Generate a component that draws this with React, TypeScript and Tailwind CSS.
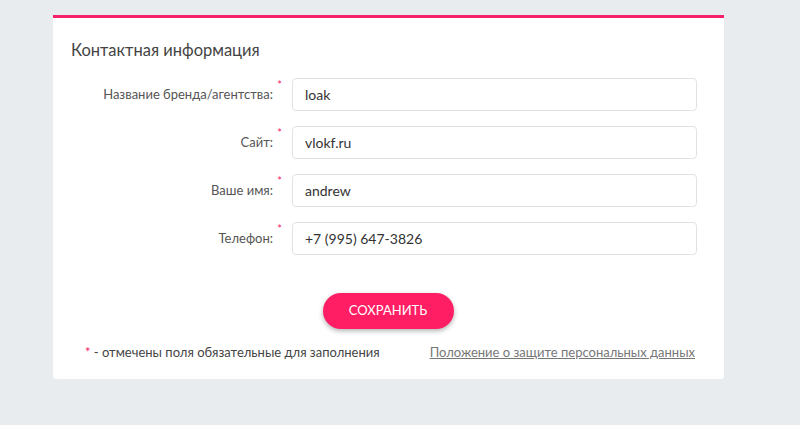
import React from "react";

const rows = [
  { label: "Название бренда/агентства:", value: "loak" },
  { label: "Сайт:", value: "vlokf.ru" },
  { label: "Ваше имя:", value: "andrew" },
  { label: "Телефон:", value: "+7 (995) 647-3826" },
];

export default function App() {
  return (
    <div className="min-h-[425px] w-[800px] bg-[#e9ecef] pt-[15px] text-[#444]" style={{ fontFamily: "Lato, 'Noto Sans', sans-serif" }}>
      <div className="ml-[53px] w-[671px] rounded-b-[4px] border-t-[3px] border-[#f5226a] bg-white pb-[16px] pl-[18px] pr-[27px] pt-[21px]">
        <h2 className="text-[16.5px] leading-[22px] text-[#444]">Контактная информация</h2>
        <div className="mt-[17px] flex flex-col gap-[15px]">
          {rows.map((r) => (
            <div key={r.label} className="flex items-center">
              <div className="flex w-[221px] justify-end pr-[19px]">
                <span className="relative text-[13px] text-[#555]">
                  {r.label}
                  <span className="absolute -right-[9px] -top-[8px] text-[11px] text-[#f5226a]">*</span>
                </span>
              </div>
              <div className="flex h-[33px] flex-1 items-center rounded-[4px] border border-[#e2e2e2] px-[12px] text-[14px] text-[#333]">
                {r.value}
              </div>
            </div>
          ))}
        </div>
        <div className="mt-[38px] flex justify-center">
          <button className="ml-[8px] h-[36px] w-[131px] rounded-full bg-[#ff1e63] text-[13px] text-white shadow-[0_2px_5px_rgba(0,0,0,0.3)]">
            СОХРАНИТЬ
          </button>
        </div>
        <div className="mt-[14px] flex items-center justify-between pl-[14px] pr-[2px]">
          <span className="text-[13px] text-[#444]">
            <span className="text-[#f5226a]">*</span> - отмечены поля обязательные для заполнения
          </span>
          <a className="text-[13px] text-[#777] underline">Положение о защите персональных данных</a>
        </div>
      </div>
    </div>
  );
}
